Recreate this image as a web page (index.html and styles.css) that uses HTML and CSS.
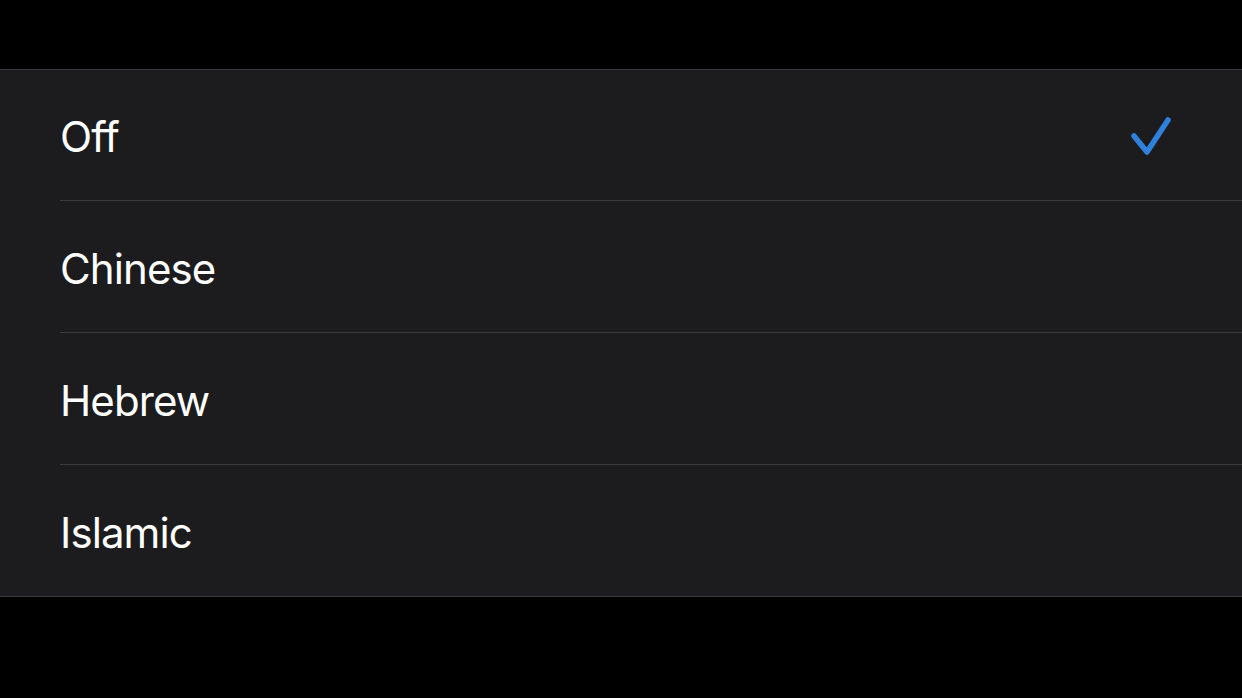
FILE: index.html
```html
<!DOCTYPE html>
<html lang="en">
<head>
    <meta charset="UTF-8">
    <title>Calendar</title>
    <link rel="stylesheet" href="styles.css">
</head>
<body>
    <div class="group">
        <div class="row">
            <span class="label">Off</span>
            <svg class="check" width="46" height="46" viewBox="0 0 46 46">
                <path d="M6 23 L19 39 L40 7" fill="none" stroke="#2f81dc" stroke-width="5.5" stroke-linecap="round" stroke-linejoin="round"/>
            </svg>
        </div>
        <div class="row"><span class="label">Chinese</span></div>
        <div class="row"><span class="label">Hebrew</span></div>
        <div class="row"><span class="label">Islamic</span></div>
    </div>
</body>
</html>
```

FILE: styles.css
```css
body {
    margin: 0;
    background: #000;
    font-family: Inter, "Noto Sans", sans-serif;
    color: #fff;
    padding-top: 69px;
}
.group {
    background: #1c1c1e;
    border-top: 1px solid #3a3a3c;
    border-bottom: 1px solid #3a3a3c;
    padding-left: 60px;
}
.row {
    height: 131px;
    display: flex;
    align-items: center;
    justify-content: space-between;
    padding-right: 68px;
    border-bottom: 1px solid #3a3a3c;
}
.row:first-child { height: 130px; }
.row:last-child { border-bottom: none; }
.label {
    font-size: 42px;
    letter-spacing: -0.9px;
    padding-top: 3px;
}
.check { margin-top: 1px; }
```
